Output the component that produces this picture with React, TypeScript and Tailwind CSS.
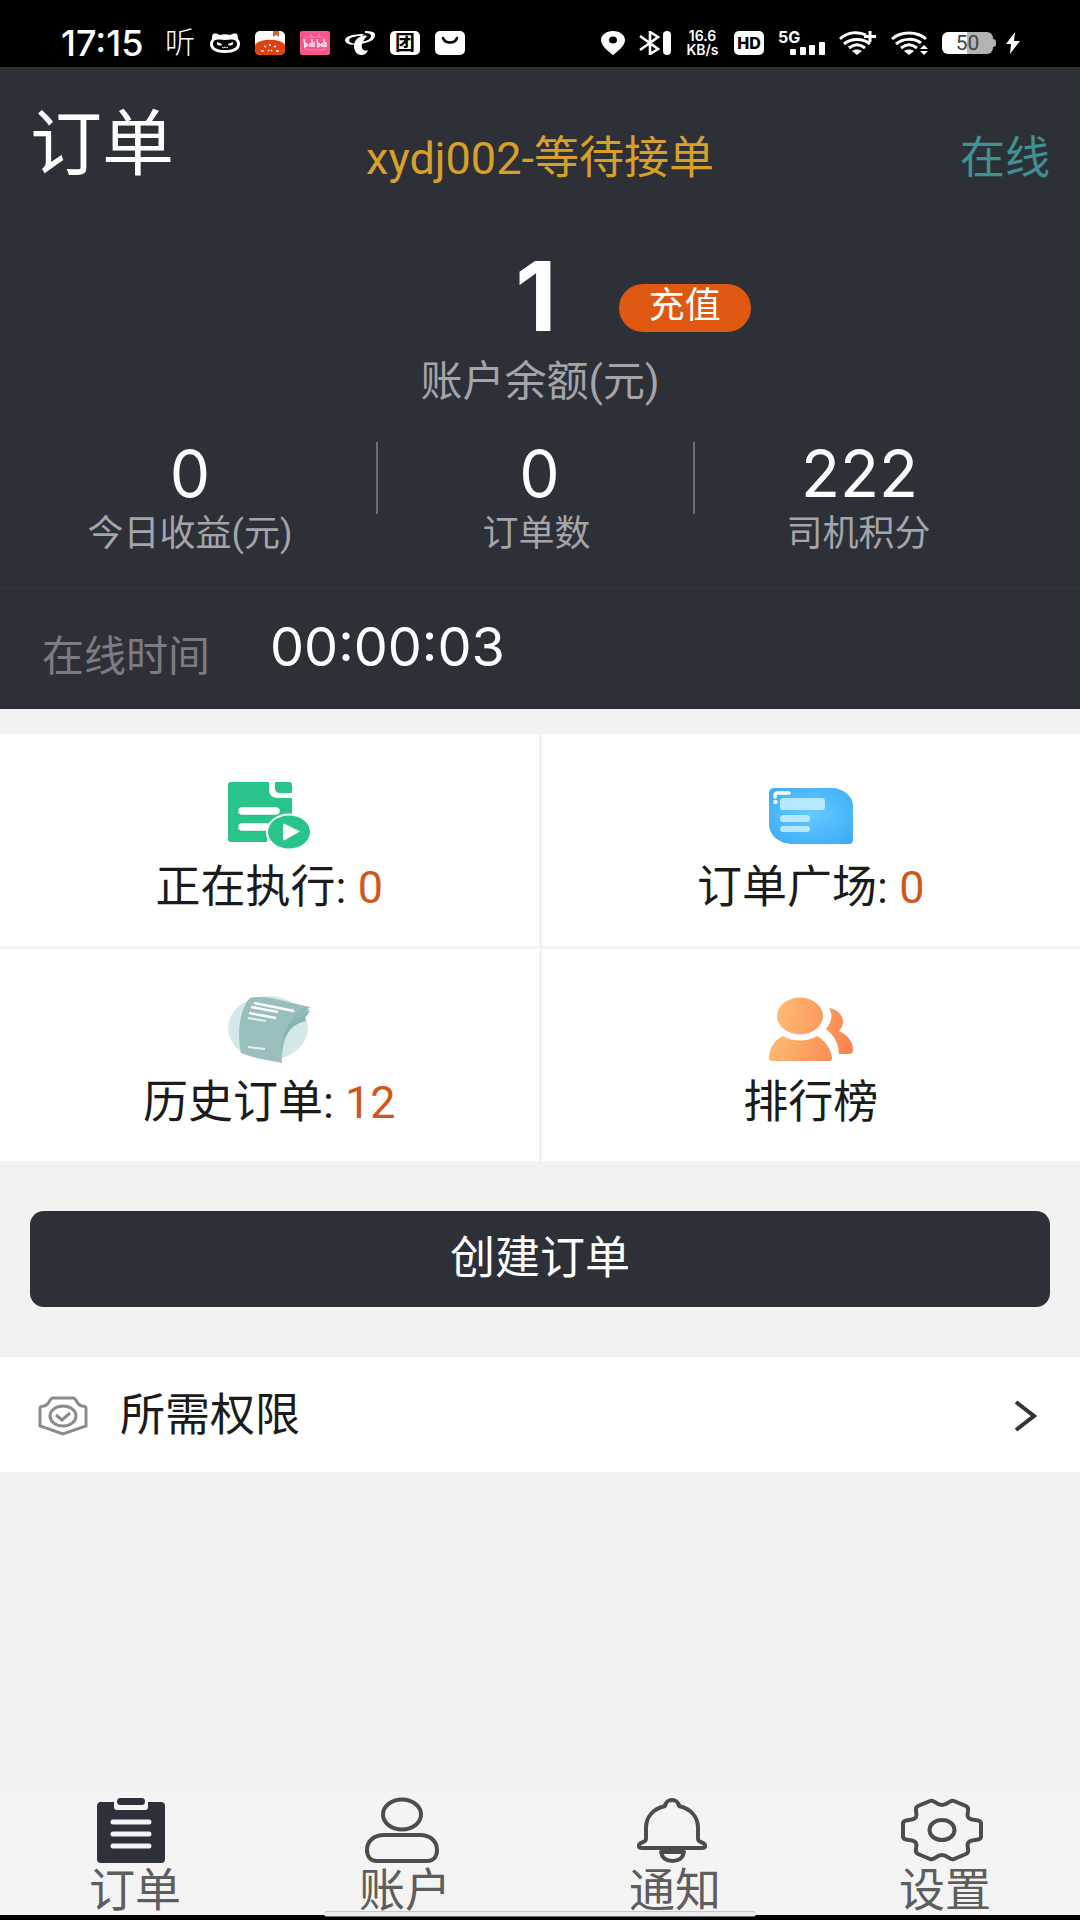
import type { ReactNode } from 'react';

const stats = [
  { label: '今日收益(元)', value: '0', className: 'pl-1' },
  { label: '订单数', value: '0', className: 'border-l-2 border-[#6d6e75] pl-2' },
  { label: '司机积分', value: '222', className: 'border-l-2 border-[#6d6e75] pr-14' },
];

function StatusBar() {
  return (
    <div className="flex h-[67px] items-center justify-between bg-black pt-[19px] pr-[60px] pl-[61px] text-white">
      <div className="flex h-[30px] items-center gap-[15px]">
        <span className="w-[89px] font-['Inter',sans-serif] text-[36px] leading-[30px] font-medium">17:15</span>
        <span className="text-[30px] leading-[30px] font-light">听</span>
        {/* Cat */}
        <svg width="30" height="24" viewBox="0 0 30 24">
          <path d="M3 3c3-1 5 0 7 1 3-1 7-1 10 0 2-1 5-2 7-1 1 2 1 4 1 5 2 2 2 4 2 5 0 6-6 9-15 9S0 19 0 13c0-2 1-4 2-5C2 6 2 4 3 3z" fill="#fff" />
          <path d="M3 13c0-5 5-5 12-4 7-1 12-1 12 4 0 4-5 6-12 6S3 17 3 13z" fill="#000" />
          <path d="M7 11l5 2c0 2-4 2-5 0zM23 11l-5 2c0 2 4 2 5 0z" fill="#fff" />
          <path d="M12 16q1.500 1.500 3 0q1.500 1.500 3 0" fill="none" stroke="#fff" />
        </svg>
        {/* Tomato */}
        <svg width="30" height="24" viewBox="0 0 30 24">
          <rect width="30" height="24" rx="5" fill="#fff" />
          <path d="M18 0h6v6l-3-2-3 2z" fill="#d2603f" />
          <path d="M0 14c4-7 26-7 30 0v5a5 5 0 0 1-5 5H5a5 5 0 0 1-5-5z" fill="#e0410f" />
          <path d="M15 13v2M9 15l2 1M21 15l-2 1M6 20h3M21 20h3M13 20l1-1M16 19l1 1" stroke="#fff" strokeWidth="1.500" />
        </svg>
        {/* Video */}
        <svg width="30" height="24" viewBox="0 0 30 24">
          <rect width="30" height="24" rx="2" fill="#f9558a" />
          <rect x="5" y="6" width="20" height="13" rx="3" fill="none" stroke="#fb86ac" />
          <path d="M10 3l3 3M20 3l-3 3" stroke="#fb86ac" />
          <path d="M4 8l1 8 3-2-3-2M10 12v4M12 8v8M14 11v5M17 8l1 8 3-2-3-2M22 12v4M24 8v8M26 11v5" fill="none" stroke="#fff" strokeWidth="1.300" />
        </svg>
        {/* Telecom */}
        <svg width="30" height="24" viewBox="0 0 30 24" fill="#fff">
          <path d="M19 3C9 3 0 5 0 9c0 4 7 6 14 4-5 0-10-1-10-4 0-2 6-4 13-4z" />
          <path d="M20 0c6 0 11 1 10 5-1 5-8 7-15 8l1-2c6-1 10-3 10-6 0-2-2-3-6-3z" />
          <path d="M22 5c-5-2-13 3-13 10 0 5 3 9 7 9 4 0 6-2 7-5-2 1-5 1-6-2-1-5 2-8 5-12z" />
        </svg>
        <span className="flex h-6 w-[30px] items-center justify-center rounded-[5px] bg-white text-[20px] leading-6 font-bold text-black">团</span>
        <svg width="30" height="24" viewBox="0 0 30 24">
          <rect width="30" height="24" rx="5" fill="#fff" />
          <path d="M8 7c2 6 12 6 14 0" fill="none" stroke="#000" strokeWidth="2.500" strokeLinecap="round" />
        </svg>
      </div>

      <div className="flex h-[30px] items-center gap-[14px]">
        <svg width="24" height="24" viewBox="0 0 24 24">
          <path d="M12 0c7 0 12 4 12 9 0 6-7 11-12 15C7 20 0 15 0 9c0-5 5-9 12-9z" fill="#fff" />
          <ellipse cx="12" cy="9" rx="4" ry="3.500" fill="#000" />
        </svg>
        <svg width="32" height="24" viewBox="0 0 32 24">
          <path d="M1 5l18 13-8 5V1l8 5L1 19" fill="none" stroke="#fff" strokeWidth="2.600" />
          <rect x="24" width="8" height="24" rx="4" fill="#fff" />
        </svg>
        <span className="flex w-[35px] flex-col items-center font-['Inter',sans-serif] text-[14px] leading-[14px] font-semibold">
          <span>16.6</span>
          <span>KB/s</span>
        </span>
        <span className="flex h-6 w-[30px] items-center justify-center rounded-[5px] bg-white font-['Inter',sans-serif] text-[16px] leading-6 font-extrabold text-black">HD</span>
        <svg className="overflow-visible" width="47" height="24" viewBox="0 0 47 24" fill="#fff">
          <text x="0" y="12" fontSize="16" fontWeight="700" fontFamily="Inter, sans-serif">5G</text>
          <rect x="12" y="18" width="6" height="6" rx="1" />
          <rect x="22" y="16" width="6" height="8" rx="1" />
          <rect x="31" y="14" width="6" height="10" rx="1" />
          <rect x="41" y="11" width="6" height="13" rx="1" />
        </svg>
        <svg width="38" height="24" viewBox="0 0 38 24" fill="none" stroke="#fff" strokeWidth="3">
          <path d="M1 8C8 1 19 0 27 4M5 13c7-6 19-6 26 0M10 17c5-4 11-4 16 0M31 0v11M25 5.500h12" />
          <path d="M13 20c3-2 7-2 10 0l-5 4z" fill="#fff" stroke="none" />
        </svg>
        <svg width="37" height="24" viewBox="0 0 37 24" fill="none" stroke="#fff" strokeWidth="3">
          <path d="M1 8C10 0 26 0 35 8M5 13c7-6 18-6 25-1M10 17c5-4 11-4 16 0" />
          <path d="M13 20c3-2 7-2 10 0l-5 4zM29 18h8l-4-4zM29 20h8l-4 4z" fill="#fff" stroke="none" />
        </svg>
        <span className="flex items-center">
          <span className="flex h-[22px] w-[51px] items-center justify-center rounded-[6px] bg-linear-to-r from-white from-50% to-[#b3b3b3] to-50% text-[21px] leading-[22px] text-[#444]">
            50
          </span>
          <span className="h-2 w-[3px] rounded-r-sm bg-[#b3b3b3]" />
        </span>
        <svg className="-ml-1" width="14" height="22" viewBox="0 0 14 22">
          <path d="M9 0L0 12h5l-1 10 10-13H8z" fill="#fff" />
        </svg>
      </div>
    </div>
  );
}

function RunningIcon() {
  return (
    <svg width="84" height="72" viewBox="0 0 84 72">
      <path d="M4 2h38v8c0 5 4 8 9 8h14v19c-14-3-28 7-25 21v4H4a3 3 0 0 1-3-3V5a3 3 0 0 1 3-3z" fill="#29c489" />
      <path d="M48 2h14a3 3 0 0 1 3 3v8H53c-3 0-5-2-5-4z" fill="#29c489" />
      <path d="M15 31h34M15 47h25" stroke="#fff" strokeWidth="7.500" strokeLinecap="round" />
      <ellipse cx="62" cy="52" rx="23" ry="18.500" fill="#fff" />
      <ellipse cx="62" cy="52" rx="21" ry="16.500" fill="#29c489" />
      <path d="M56 44.500a1 1 0 0 1 1-1l16 8-16 9a1 1 0 0 1-1-1z" fill="#fff" />
    </svg>
  );
}

function SquareIcon() {
  return (
    <svg width="84" height="72" viewBox="0 0 84 72">
      <defs>
        <radialGradient id="square" cx="50%" cy="45%" r="65%">
          <stop offset="0" stopColor="#64cbff" />
          <stop offset="1" stopColor="#3fadf8" />
        </radialGradient>
      </defs>
      <path d="M5 8h57c12 0 22 8 22 18v34a4 4 0 0 1-4 4H24C10 64 0 55 0 44V13a5 5 0 0 1 5-5z" fill="url(#square)" />
      <rect x="11" y="18" width="45" height="12" rx="3" fill="#b5e7ff" />
      <rect x="11" y="35" width="30" height="7" rx="3" fill="#b5e7ff" />
      <rect x="11" y="46" width="30" height="6" rx="3" fill="#b5e7ff" />
      <path d="M6 17v-1c0-2 1-3 3-3h11" fill="none" stroke="#fff" strokeWidth="3.500" strokeLinecap="round" />
      <circle cx="6.500" cy="22" r="2.300" fill="#e2f6ff" />
    </svg>
  );
}

function HistoryIcon() {
  return (
    <svg width="84" height="72" viewBox="0 0 84 72">
      <ellipse cx="41" cy="33" rx="40" ry="32" fill="#d5e8e7" />
      <path d="M55 66c0-22 6-36 24-40l-1-3 5-7-12-2-18 22z" fill="#82b6b4" />
      <path d="M23 3C39 -1 61 8 84 12l-7 3 6 2c-18 1-30 16-28 51-14-3-27-5-41-10C10 39 12 15 23 3z" fill="#98bfbd" />
      <path d="M70 24c4-2 8-3 12-5l-6-1 7-4-6-1c-6 3-10 7-13 13z" fill="#8dbab8" />
      <path d="M27 8l40 8M24 12l27 5M22 18l27 5" stroke="#fff" strokeWidth="2.500" />
      <path d="M21 23l18 3M21 52l17 2" stroke="#e4efee" strokeWidth="2" />
    </svg>
  );
}

function RankIcon() {
  return (
    <svg width="84" height="72" viewBox="0 0 84 72">
      <defs>
        <linearGradient id="rank" gradientUnits="userSpaceOnUse" x1="0" y1="20" x2="84" y2="40">
          <stop offset="0" stopColor="#fdbf75" />
          <stop offset="1" stopColor="#fb8450" />
        </linearGradient>
      </defs>
      <g fill="url(#rank)">
        <ellipse cx="31" cy="21" rx="23" ry="18.500" />
        <path d="M14 41c10 6 24 6 34 0 9 5 14 14 15 22 0 2-1 3-3 3H3c-2 0-3-1-3-3 0-9 5-18 14-22z" />
        <path d="M60 13c12 2 19 13 10 23 9 4 14 11 14 19 0 3-2 4-4 4H70c0-10-5-19-13-25 6-7 7-14 3-21z" />
      </g>
    </svg>
  );
}

function Tile({ icon, label, count }: { icon: ReactNode; label: string; count?: number }) {
  return (
    <a href="#" className="flex flex-col items-center gap-2 bg-white pt-[46px] pb-[30px] text-[#1b1b1b]">
      {icon}
      <span className="text-[45px] leading-[56px]">
        {label}
        {count !== undefined && <span className="text-[#cf571c]"> {count}</span>}
      </span>
    </a>
  );
}

function NavItem({ label, children }: { label: string; children: ReactNode }) {
  return (
    <a href="#" className="flex flex-1 flex-col items-center text-[#5d5d5d]">
      <svg className="overflow-visible" width="84" height="68" viewBox="0 0 84 68" fill="none" stroke="#4c4c4c" strokeWidth="4" strokeLinejoin="round">
        {children}
      </svg>
      <span className="text-[46px] leading-[50px]">{label}</span>
    </a>
  );
}

export default function App() {
  return (
    <div className="flex min-h-screen flex-col bg-[#f2f2f2] font-['Roboto','Noto_Sans_CJK_SC',sans-serif]">
      <StatusBar />

      {/* Header */}
      <header className="bg-[#2e3038] text-white">
        <div className="grid grid-cols-[1fr_auto_1fr] items-end px-[30px] pt-[42px]">
          <h1 className="text-[72px] leading-[72px]">订单</h1>
          <span className="text-[45px] leading-[44px] text-[#d7a02a]">xydj002-等待接单</span>
          <span className="text-right text-[45px] leading-[44px] text-[#409190]">在线</span>
        </div>

        <div className="mt-[67px] grid grid-cols-[1fr_auto_1fr] items-center">
          <span className="col-start-2 pr-2 font-['Inter',sans-serif] text-[96px] leading-[96px] font-bold">1</span>
          <button className="mt-6 ml-[54px] h-12 w-[132px] rounded-full bg-[#de5812] pb-1 text-[36px] leading-10">充值</button>
        </div>
        <p className="mt-[14px] text-center text-[42px] leading-[48px] text-[#a4a5aa]">账户余额(元)</p>

        <div className="mt-9 grid grid-cols-[376fr_317fr_387fr] pb-[34px]">
          {stats.map((s) => (
            <div key={s.label} className="text-center">
              <div className={`h-[72px] font-['Inter',sans-serif] text-[64px] leading-[64px] ${s.className}`}>{s.value}</div>
              <div className={`text-[36px] leading-10 text-[#a4a5aa] ${s.value === '222' ? 'pr-14' : 'pl-1'}`}>{s.label}</div>
            </div>
          ))}
        </div>

        <div className="flex items-end gap-[60px] border-t border-[#34373e] px-[42px] pt-7 pb-7">
          <span className="text-[42px] leading-[48px] text-[#7b7c82]">在线时间</span>
          <span className="pb-1 font-['Inter',sans-serif] text-[54px] leading-[60px]">00:00:03</span>
        </div>
      </header>

      {/* Order tiles */}
      <section className="mt-[25px] grid grid-cols-2 gap-[3px]">
        <Tile icon={<RunningIcon />} label="正在执行:" count={0} />
        <Tile icon={<SquareIcon />} label="订单广场:" count={0} />
        <Tile icon={<HistoryIcon />} label="历史订单:" count={12} />
        <Tile icon={<RankIcon />} label="排行榜" />
      </section>

      <button className="mx-[30px] mt-[50px] h-24 rounded-[14px] bg-[#2e3038] text-[45px] leading-[56px] text-white">创建订单</button>

      <a href="#" className="mt-[50px] flex items-center bg-white pt-[31px] pr-[42px] pb-7 pl-[38px] text-[#1b1b1b]">
        <svg width="50" height="42" viewBox="0 0 50 42" fill="none" stroke="#8b8b8b" strokeWidth="3">
          <path d="M15 3h20c4 0 3 7 9 8 2 0 4 0 4 2v18L25 39 2 31V13c0-2 2-2 4-2 6-1 5-8 9-8z" />
          <ellipse cx="25" cy="21" rx="13" ry="10" />
          <path d="M18 20l6 5 8-7" />
        </svg>
        <span className="ml-8 flex-1 text-[45px] leading-[56px]">所需权限</span>
        <svg width="24" height="34" viewBox="0 0 24 34" fill="none" stroke="#333" strokeWidth="4">
          <path d="M2 3l18 14L2 31" />
        </svg>
      </a>

      {/* Bottom navigation */}
      <nav className="relative mt-auto flex border-b-[5px] border-black bg-[#f4f4f4] pt-1.5">
        <NavItem label="订单">
          <g fill="#2e303a" stroke="none">
            <path d="M9 5h12v5a3 3 0 0 0 3 3h28a3 3 0 0 0 3-3V5h13a4 4 0 0 1 4 4v53a4 4 0 0 1-4 4H8a4 4 0 0 1-4-4V9a4 4 0 0 1 5-4z" />
            <rect x="24" y="1" width="28" height="7" rx="3.500" />
          </g>
          <path d="M20 25h36M20 37h36M20 49h36" stroke="#f4f4f4" strokeWidth="5" strokeLinecap="round" />
        </NavItem>
        <NavItem label="账户">
          <ellipse cx="39" cy="17.500" rx="19" ry="15" />
          <path d="M21 38h36c10 0 17 6 17 15 0 7-4 11-10 11H14C8 64 4 60 4 53c0-9 7-15 17-15z" />
        </NavItem>
        <NavItem label="通知">
          <path d="M32 9c1-8 13-8 14 0 12 3 19 11 19 22v11c0 4 8 3 7 7 0 2-1 2-3 2H9c-2 0-3 0-3-2-1-4 7-3 7-7V31c0-11 7-19 19-22z" />
          <path d="M28 55h23c-1 6-5 9-11.500 9S29 61 28 55z" />
        </NavItem>
        <NavItem label="设置">
          <path d="M27 4c4-2 6 4 12 4s8-6 12-4l12 5c5 2 0 7 2 11 3 5 12 1 13 6v14c-1 5-10 1-13 6-2 4 3 9-2 11l-12 5c-4 2-6-4-12-4s-8 6-12 4l-12-5c-5-2 0-7-2-11-3-5-12-1-13-6V26c1-5 10-1 13-6 2-4-3-9 2-11z" />
          <ellipse cx="39" cy="33" rx="12.500" ry="10" />
        </NavItem>
        <div className="absolute -bottom-0.5 left-[30%] h-1.5 w-2/5 rounded-full border-t border-[#c8c8c8] border-b border-b-[#666] bg-[#eee]" />
      </nav>
    </div>
  );
}
